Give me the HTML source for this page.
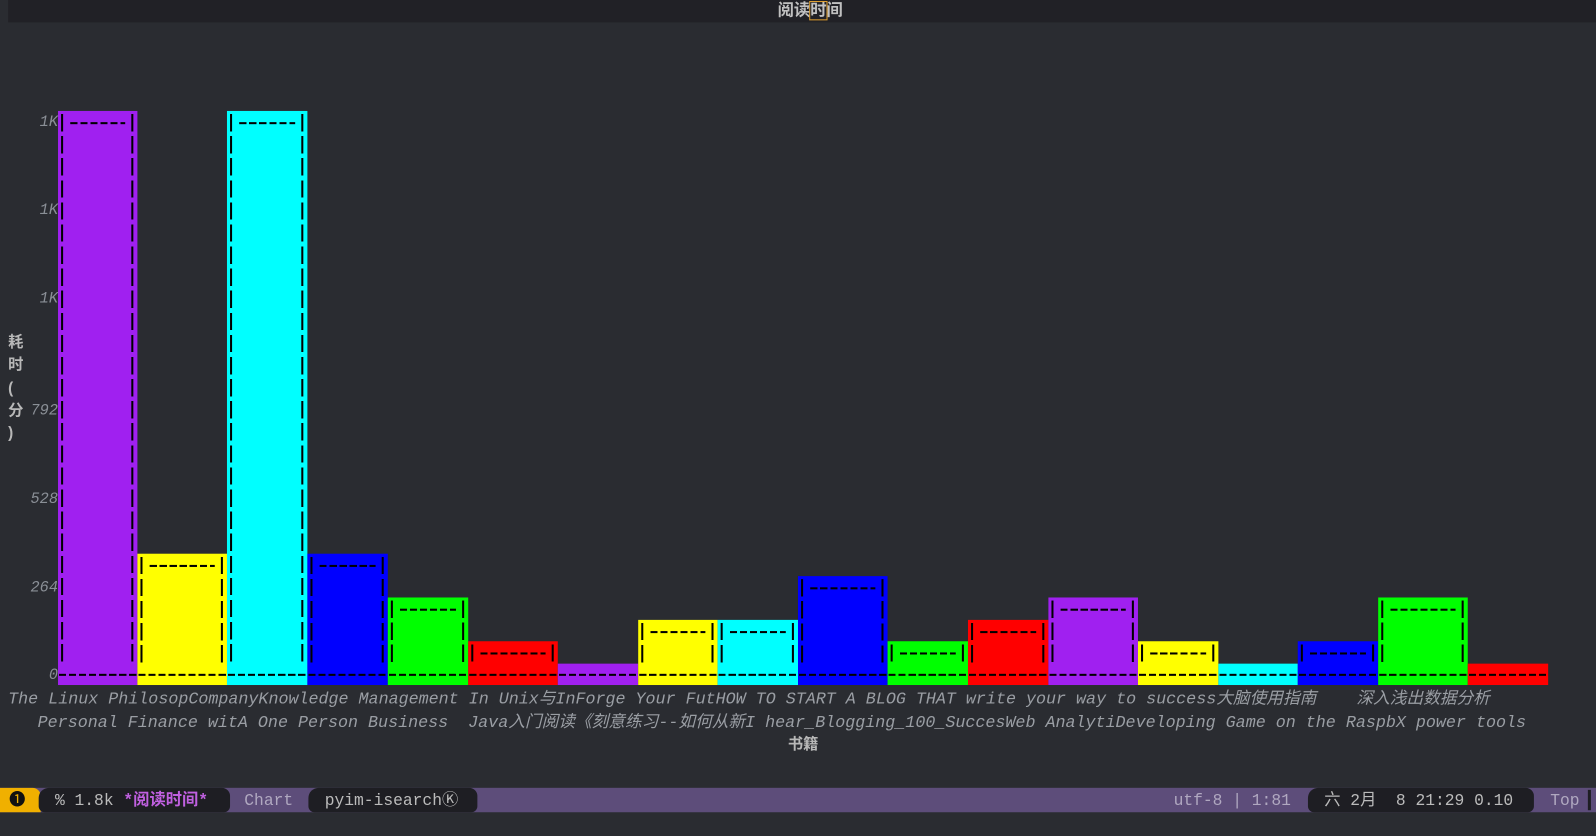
<!DOCTYPE html>
<html><head><meta charset="utf-8">
<style>
html,body{margin:0;padding:0;width:1596px;height:836px;overflow:hidden;background:#2a2c31;}
#w{position:absolute;left:0;top:0;width:1568px;height:821px;transform:scale(1.01786);transform-origin:0 0;font-family:"Liberation Mono","Noto Sans CJK SC",monospace;}
.a{position:absolute;white-space:pre;}
.bar{position:absolute;overflow:hidden;}
.yl{font-style:italic;color:#8a8f96;font-size:15px;}
.xl{font-style:italic;color:#9a9ea4;font-size:16.4px;}
.ml{font-size:16px;color:#bbbbbb;top:776px;line-height:22px;}
.dl{position:absolute;height:1.5px;background:repeating-linear-gradient(90deg,#000 0 7px,transparent 7px 9.85px);}
.vl{position:absolute;width:2px;background:repeating-linear-gradient(#000 0 17px,transparent 17px 21.7px);}
</style></head><body><div id="w">
<div class="a" style="left:8px;top:0;width:1560px;height:22px;background:#212126"></div>
<div class="a" style="left:764px;top:0;font-family:'Liberation Sans','Noto Sans CJK SC',sans-serif;font-weight:bold;color:#c0c0c0;font-size:16px;line-height:22px">阅读<span style="outline:1px solid #e0a030;">时</span>间</div>
<div id="bars"></div>
<div class="a yl" style="right:1511px;top:112px">1K</div>
<div class="a yl" style="right:1511px;top:198px">1K</div>
<div class="a yl" style="right:1511px;top:285px">1K</div>
<div class="a yl" style="right:1511px;top:395px">792</div>
<div class="a yl" style="right:1511px;top:482px">528</div>
<div class="a yl" style="right:1511px;top:569px">264</div>
<div class="a yl" style="right:1511px;top:655px">0</div>
<div class="a" style="left:8px;top:326px;font-family:'Liberation Sans','Noto Sans CJK SC',sans-serif;font-weight:bold;color:#b8b8b8;font-size:15px;line-height:22.3px">耗<br>时<br>(<br>分<br>)</div>
<div class="a xl" style="left:8px;top:672px">The Linux PhilosopCompanyKnowledge Management In Unix与InForge Your FutHOW TO START A BLOG THAT write your way to success大脑使用指南    深入浅出数据分析</div>
<div class="a xl" style="left:37px;top:695px">Personal Finance witA One Person Business  Java入门阅读《刻意练习--如何从新I hear_Blogging_100_SuccesWeb AnalytiDeveloping Game on the RaspbX power tools</div>
<div class="a" style="left:774px;top:720px;font-family:'Liberation Sans','Noto Sans CJK SC',sans-serif;font-weight:bold;color:#b8b8b8;font-size:15px">书籍</div>
<div class="a" style="left:0;top:774px;width:1568px;height:24px;background:#5d4d7a"></div>
<div class="a" style="left:0;top:774px;width:40px;height:24px;background:#f0b000;border-radius:0 8px 0 0"></div>
<div class="a" style="left:38px;top:774px;width:188px;height:24px;background:#1e1e23;border-radius:10px 8px 6px 6px"></div>
<div class="a" style="left:303px;top:774px;width:166px;height:24px;background:#1e1e23;border-radius:10px 8px 6px 6px"></div>
<div class="a" style="left:1285px;top:774px;width:222px;height:24px;background:#1e1e23;border-radius:10px 8px 6px 6px"></div>
<div class="a" style="left:1560px;top:776px;width:3px;height:20px;background:#1e1e23"></div>
<div class="a ml" style="left:9px;color:#111">❶</div>
<div class="a ml" style="left:54px">% 1.8k <b style="color:#c060e0">*阅读时间*</b></div>
<div class="a ml" style="left:240px;color:#b0a8c0">Chart</div>
<div class="a ml" style="left:319px">pyim-isearchⓀ</div>
<div class="a ml" style="left:1153px;color:#b0a8c0">utf-8 | 1:81</div>
<div class="a ml" style="left:1301px">六 2月  8 21:29 0.10</div>
<div class="a ml" style="left:1523px;color:#b0a8c0">Top</div>
</div>
<script>
var B=[[57,135,109,'#a020f0'],[135,223,544,'#ffff00'],[223,302,109,'#00ffff'],[302,381,544,'#0000ff'],[381,460,587,'#00ff00'],[460,548,630,'#ff0000'],[548,627,652,'#a020f0'],[627,705,609,'#ffff00'],[705,784,609,'#00ffff'],[784,872,566,'#0000ff'],[872,951,630,'#00ff00'],[951,1030,609,'#ff0000'],[1030,1118,587,'#a020f0'],[1118,1197,630,'#ffff00'],[1197,1275,652,'#00ffff'],[1275,1354,630,'#0000ff'],[1354,1442,587,'#00ff00'],[1442,1521,652,'#ff0000']];
var h='';
B.forEach(function(b){
 var w=b[1]-b[0],H=673-b[2],s='';
 var rows=Math.round(H/21.7);
 if(rows>1){
  s+='<div class="vl" style="left:3px;top:3px;height:'+(H-24)+'px"></div>';
  s+='<div class="vl" style="right:4px;top:3px;height:'+(H-24)+'px"></div>';
  s+='<div class="dl" style="left:12px;right:12px;top:11px"></div>';
 }
 s+='<div class="dl" style="left:1px;right:0;top:'+(H-11)+'px"></div>';
 h+='<div class="bar" style="left:'+b[0]+'px;top:'+b[2]+'px;width:'+w+'px;height:'+H+'px;background:'+b[3]+'">'+s+'</div>';
});
document.getElementById('bars').innerHTML=h;
</script>
</body></html>
